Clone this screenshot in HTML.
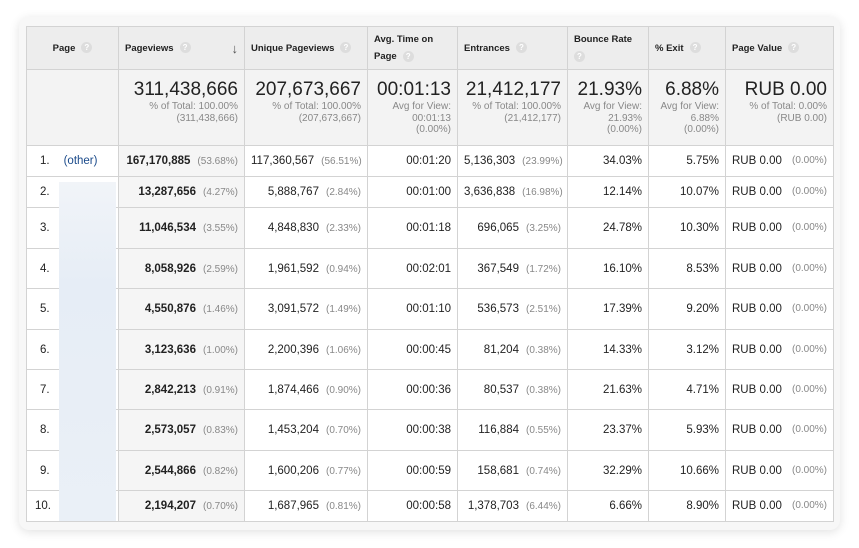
<!DOCTYPE html>
<html><head><meta charset="utf-8"><style>
body{margin:0;width:859px;height:548px;background:#fff;position:relative;overflow:hidden;font-family:"Liberation Sans",Arial,sans-serif;}
.card{position:absolute;left:19px;top:17px;width:821px;height:513px;border-radius:10px;background:#f7f7f7;box-shadow:0 2px 10px rgba(0,0,0,.12);}
table{position:absolute;left:26px;top:26px;width:807px;border-collapse:collapse;table-layout:fixed;background:#fff;}
td,th{border:1px solid #d3d3d3;padding:0 6px;box-sizing:border-box;font-size:11.5px;color:#222;white-space:nowrap;overflow:hidden}
th{background:#ededed;font-size:9.5px;font-weight:bold;text-align:left;vertical-align:middle;color:#222;line-height:17px}
.q{display:inline-block;width:11px;height:11px;border-radius:50%;background:#ddd;color:#fff;font-size:8px;text-align:center;line-height:11px;margin-left:6px;vertical-align:middle;font-weight:bold}
tr.tot td{background:#f3f3f3;text-align:right;vertical-align:top;padding-top:10px;color:#888;font-size:10px;line-height:11.5px}
tr.tot td b{display:block;font-weight:normal;font-size:19px;color:#222;line-height:20px;margin-bottom:1px}
td.r{text-align:right}
td.pv{background:#f5f5f5;text-align:right}
.g{color:#888;font-size:10px;margin-left:7px}
td b{font-weight:bold}
td.n{padding-left:13px}
.blur{position:absolute;left:59px;top:182px;width:57px;height:339px;background:linear-gradient(180deg,#f1f4f8,#e6edf6 30%,#e8eef6 60%,#eaf0f7);}
a{color:#1a4a8a;text-decoration:none;margin-left:14px}
</style></head><body>
<div class="card"></div>
<table>
<colgroup><col style="width:92px"><col style="width:126px"><col style="width:123px"><col style="width:90px"><col style="width:110px"><col style="width:81px"><col style="width:77px"><col style="width:108px"></colgroup>
<tr style="height:43px">
<th style="text-align:center">Page<span class="q">?</span></th>
<th>Pageviews<span class="q">?</span><span style="float:right;font-size:13px;color:#555">↓</span></th>
<th>Unique Pageviews<span class="q">?</span></th>
<th style="vertical-align:middle">Avg. Time on<br>Page<span class="q">?</span></th>
<th>Entrances<span class="q">?</span></th>
<th style="vertical-align:top;padding-top:4px">Bounce Rate<br><span class="q" style="margin-left:0">?</span></th>
<th>% Exit<span class="q">?</span></th>
<th>Page Value<span class="q">?</span></th>
</tr>
<tr class="tot" style="height:76px">
<td></td>
<td><b>311,438,666</b>% of Total: 100.00%<br>(311,438,666)</td>
<td><b>207,673,667</b>% of Total: 100.00%<br>(207,673,667)</td>
<td><b>00:01:13</b>Avg for View:<br>00:01:13<br>(0.00%)</td>
<td><b>21,412,177</b>% of Total: 100.00%<br>(21,412,177)</td>
<td><b>21.93%</b>Avg for View:<br>21.93%<br>(0.00%)</td>
<td><b>6.88%</b>Avg for View:<br>6.88%<br>(0.00%)</td>
<td><b>RUB 0.00</b>% of Total: 0.00%<br>(RUB 0.00)</td>
</tr>
<tr style="height:31px"><td class="n">1.<a>(other)</a></td><td class="pv"><b>167,170,885</b><span class="g">(53.68%)</span></td><td class="r">117,360,567<span class="g">(56.51%)</span></td><td class="r">00:01:20</td><td class="r">5,136,303<span class="g">(23.99%)</span></td><td class="r">34.03%</td><td class="r">5.75%</td><td>RUB 0.00<span class="g" style="float:right">(0.00%)</span></td></tr>
<tr style="height:31px"><td class="n">2.</td><td class="pv"><b>13,287,656</b><span class="g">(4.27%)</span></td><td class="r">5,888,767<span class="g">(2.84%)</span></td><td class="r">00:01:00</td><td class="r">3,636,838<span class="g">(16.98%)</span></td><td class="r">12.14%</td><td class="r">10.07%</td><td>RUB 0.00<span class="g" style="float:right">(0.00%)</span></td></tr>
<tr style="height:41px"><td class="n">3.</td><td class="pv"><b>11,046,534</b><span class="g">(3.55%)</span></td><td class="r">4,848,830<span class="g">(2.33%)</span></td><td class="r">00:01:18</td><td class="r">696,065<span class="g">(3.25%)</span></td><td class="r">24.78%</td><td class="r">10.30%</td><td>RUB 0.00<span class="g" style="float:right">(0.00%)</span></td></tr>
<tr style="height:40px"><td class="n">4.</td><td class="pv"><b>8,058,926</b><span class="g">(2.59%)</span></td><td class="r">1,961,592<span class="g">(0.94%)</span></td><td class="r">00:02:01</td><td class="r">367,549<span class="g">(1.72%)</span></td><td class="r">16.10%</td><td class="r">8.53%</td><td>RUB 0.00<span class="g" style="float:right">(0.00%)</span></td></tr>
<tr style="height:41px"><td class="n">5.</td><td class="pv"><b>4,550,876</b><span class="g">(1.46%)</span></td><td class="r">3,091,572<span class="g">(1.49%)</span></td><td class="r">00:01:10</td><td class="r">536,573<span class="g">(2.51%)</span></td><td class="r">17.39%</td><td class="r">9.20%</td><td>RUB 0.00<span class="g" style="float:right">(0.00%)</span></td></tr>
<tr style="height:40px"><td class="n">6.</td><td class="pv"><b>3,123,636</b><span class="g">(1.00%)</span></td><td class="r">2,200,396<span class="g">(1.06%)</span></td><td class="r">00:00:45</td><td class="r">81,204<span class="g">(0.38%)</span></td><td class="r">14.33%</td><td class="r">3.12%</td><td>RUB 0.00<span class="g" style="float:right">(0.00%)</span></td></tr>
<tr style="height:40px"><td class="n">7.</td><td class="pv"><b>2,842,213</b><span class="g">(0.91%)</span></td><td class="r">1,874,466<span class="g">(0.90%)</span></td><td class="r">00:00:36</td><td class="r">80,537<span class="g">(0.38%)</span></td><td class="r">21.63%</td><td class="r">4.71%</td><td>RUB 0.00<span class="g" style="float:right">(0.00%)</span></td></tr>
<tr style="height:41px"><td class="n">8.</td><td class="pv"><b>2,573,057</b><span class="g">(0.83%)</span></td><td class="r">1,453,204<span class="g">(0.70%)</span></td><td class="r">00:00:38</td><td class="r">116,884<span class="g">(0.55%)</span></td><td class="r">23.37%</td><td class="r">5.93%</td><td>RUB 0.00<span class="g" style="float:right">(0.00%)</span></td></tr>
<tr style="height:40px"><td class="n">9.</td><td class="pv"><b>2,544,866</b><span class="g">(0.82%)</span></td><td class="r">1,600,206<span class="g">(0.77%)</span></td><td class="r">00:00:59</td><td class="r">158,681<span class="g">(0.74%)</span></td><td class="r">32.29%</td><td class="r">10.66%</td><td>RUB 0.00<span class="g" style="float:right">(0.00%)</span></td></tr>
<tr style="height:31px"><td class="n" style="padding-left:8px">10.</td><td class="pv"><b>2,194,207</b><span class="g">(0.70%)</span></td><td class="r">1,687,965<span class="g">(0.81%)</span></td><td class="r">00:00:58</td><td class="r">1,378,703<span class="g">(6.44%)</span></td><td class="r">6.66%</td><td class="r">8.90%</td><td>RUB 0.00<span class="g" style="float:right">(0.00%)</span></td></tr>
</table>
<div class="blur"></div>
</body></html>
